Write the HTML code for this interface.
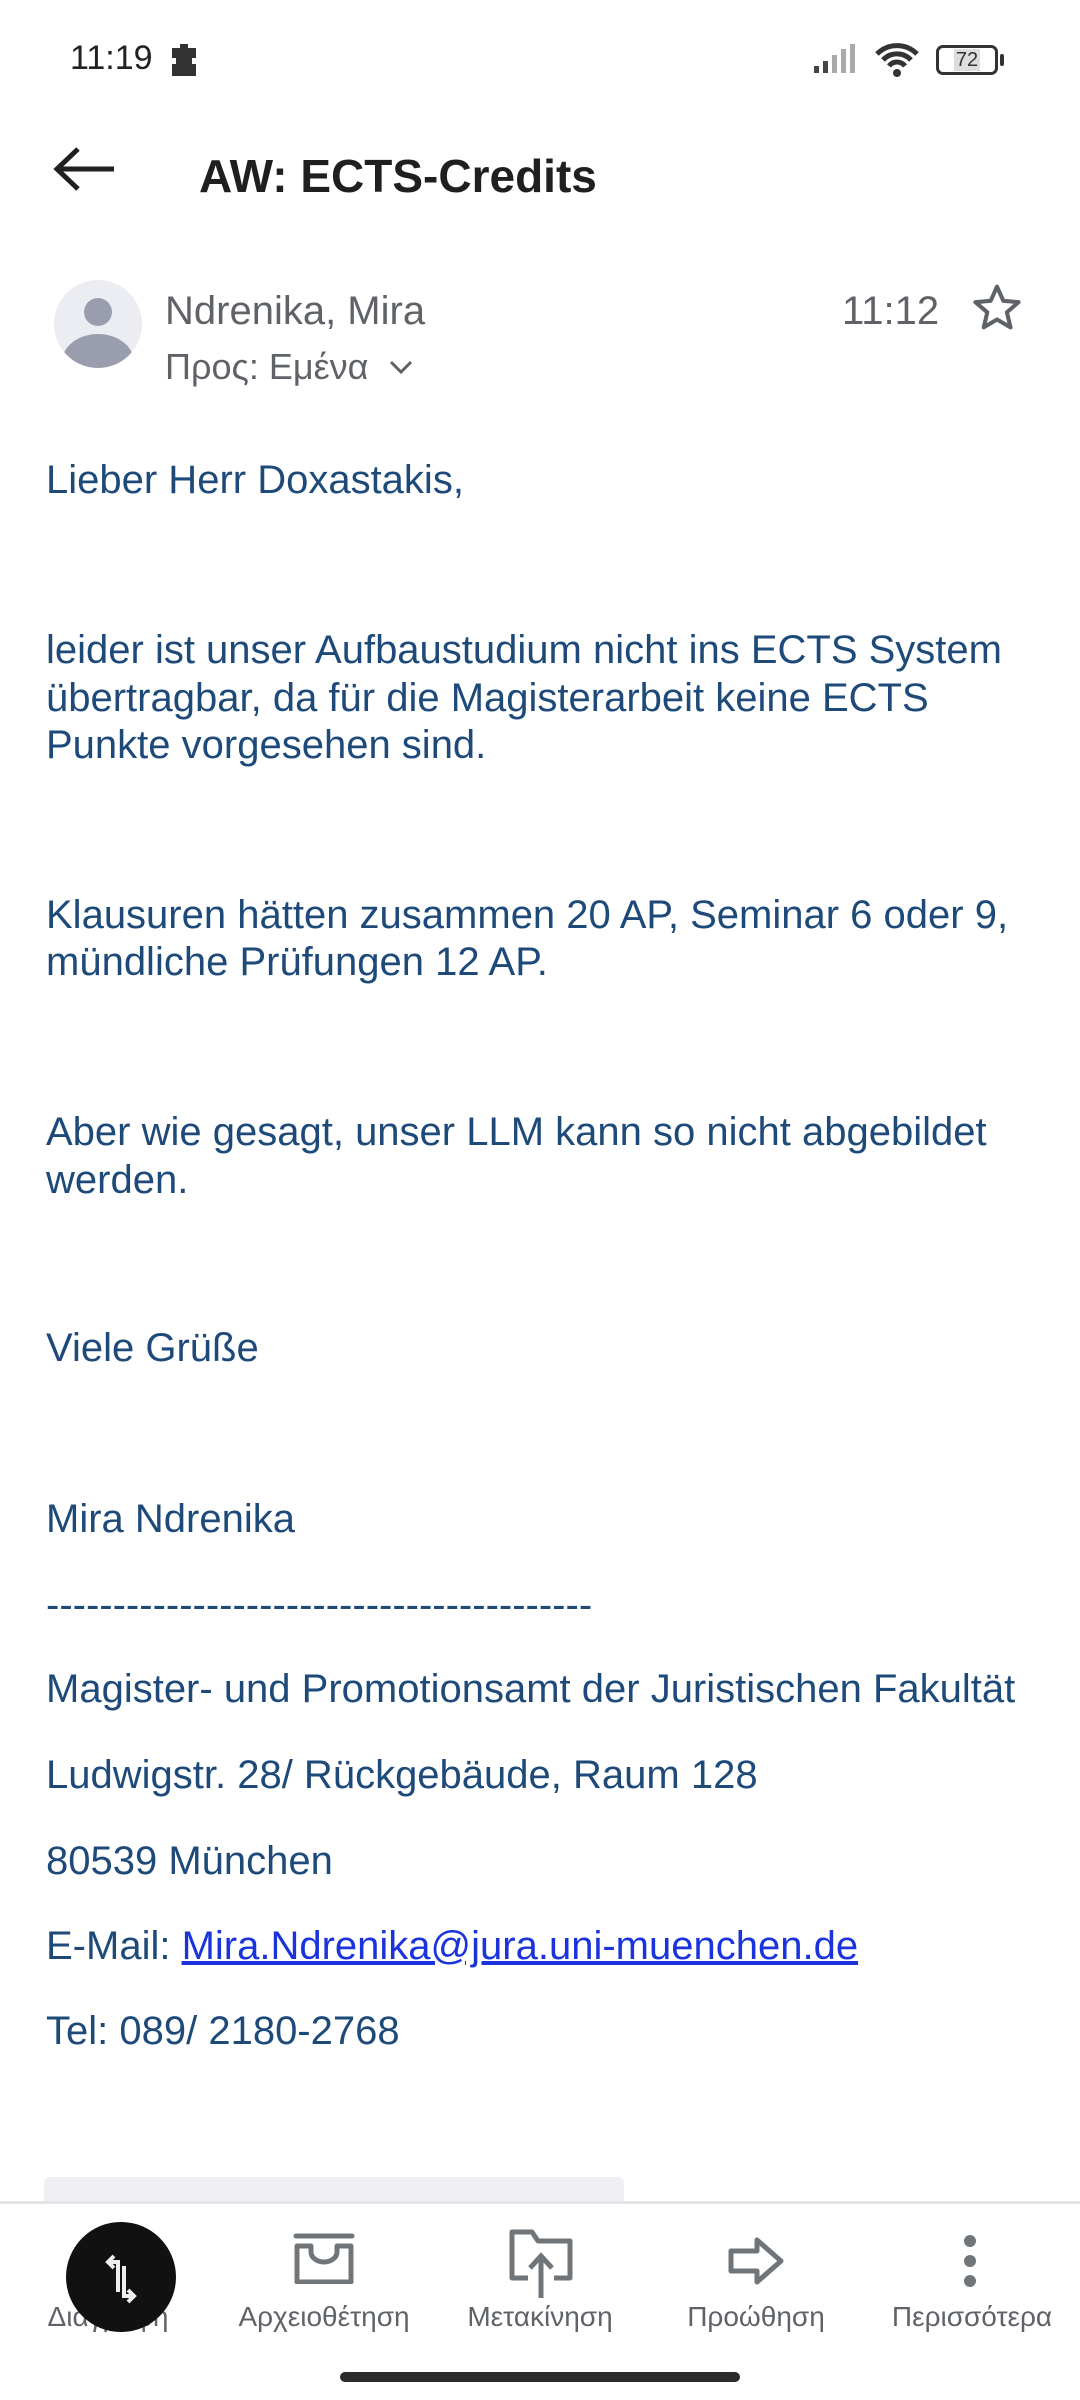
<!DOCTYPE html>
<html><head><meta charset="utf-8">
<style>
*{margin:0;padding:0;box-sizing:border-box}
body{width:1080px;height:2400px;background:#fff;position:relative;overflow:hidden;font-family:"Liberation Sans","DejaVu Sans",sans-serif}
.a{position:absolute;white-space:nowrap}
.b{position:absolute;left:46px;font-size:40px;line-height:44px;color:#1e4a7a;white-space:nowrap}
.lab{position:absolute;top:2299px;font-size:28px;color:#5f6368;width:216px;text-align:center;line-height:36px}
</style></head><body>
<div class="a" style="left:70px;top:38px;font-size:34px;color:#222;line-height:40px">11:19</div>
<svg class="a" style="left:168px;top:42px" width="36" height="34" viewBox="0 0 36 34"><path d="M4 6h8V2h8v4h8v10h-4v6h4v12H4V22h4v-6H4z" fill="#333"/></svg>
<svg class="a" style="left:812px;top:44px" width="50" height="30" viewBox="0 0 50 30"><rect x="2" y="22" width="5" height="7" fill="#444"/><rect x="11" y="17" width="5" height="12" fill="#444"/><rect x="20" y="11" width="5" height="18" fill="#aaa"/><rect x="29" y="5" width="5" height="24" fill="#aaa"/><rect x="38" y="0" width="5" height="29" fill="#aaa"/></svg>
<svg class="a" style="left:874px;top:42px" width="46" height="36" viewBox="0 0 46 36"><path d="M3 12a28 28 0 0 1 40 0M9 18a19 19 0 0 1 28 0M15 24a10 10 0 0 1 16 0" stroke="#333" stroke-width="5" fill="none"/><circle cx="23" cy="31" r="4" fill="#333"/></svg>
<div class="a" style="left:936px;top:45px;width:62px;height:30px;border:3px solid #333;border-radius:7px;font-size:20px;line-height:24px;text-align:center;color:#333"><span style="background:#ddd;padding:0 2px">72</span></div>
<div class="a" style="left:1000px;top:54px;width:4px;height:12px;background:#333;border-radius:2px"></div>

<svg class="a" style="left:52px;top:146px" width="66" height="46" viewBox="0 0 66 46"><path d="M62 23H6M26 3L5 23l21 20" stroke="#1f1f1f" stroke-width="5" fill="none"/></svg>
<div class="a" style="left:199px;top:148px;font-size:46px;font-weight:bold;color:#1f1f1f;line-height:56px">AW: ECTS-Credits</div>

<svg class="a" style="left:54px;top:280px" width="88" height="88" viewBox="0 0 88 88"><defs><clipPath id="c"><circle cx="44" cy="44" r="44"/></clipPath></defs><circle cx="44" cy="44" r="44" fill="#ececf3"/><g clip-path="url(#c)" fill="#9a9dad"><circle cx="44" cy="32" r="14"/><ellipse cx="44" cy="82" rx="36" ry="28"/></g></svg>
<div class="a" style="left:165px;top:288px;font-size:40px;color:#5f6368;line-height:46px">Ndrenika, Mira</div>
<div class="a" style="left:165px;top:344px;font-size:36px;color:#5f6368;line-height:46px">Προς: Εμένα</div>
<svg class="a" style="left:388px;top:358px" width="26" height="18" viewBox="0 0 26 18"><path d="M3 4l10 10 10-10" stroke="#5f6368" stroke-width="3" fill="none"/></svg>
<div class="a" style="left:842px;top:288px;font-size:40px;color:#5f6368;line-height:46px">11:12</div>
<svg class="a" style="left:970px;top:281px" width="54" height="54" viewBox="0 0 24 24"><path d="M12 2.5l2.8 6.3 6.8.6-5.2 4.5 1.6 6.7L12 17.1l-5.9 3.5 1.6-6.7L2.4 9.4l6.8-.6z" stroke="#5f6368" stroke-width="1.8" fill="none" stroke-linejoin="round"/></svg>

<div class="b" style="top:458px">Lieber Herr Doxastakis,</div>
<div class="b" style="top:628px">leider ist unser Aufbaustudium nicht ins ECTS System</div>
<div class="b" style="top:676px">übertragbar, da für die Magisterarbeit keine ECTS</div>
<div class="b" style="top:723px">Punkte vorgesehen sind.</div>
<div class="b" style="top:893px">Klausuren hätten zusammen 20 AP, Seminar 6 oder 9,</div>
<div class="b" style="top:940px">mündliche Prüfungen 12 AP.</div>
<div class="b" style="top:1110px">Aber wie gesagt, unser LLM kann so nicht abgebildet</div>
<div class="b" style="top:1158px">werden.</div>
<div class="b" style="top:1326px">Viele Grüße</div>
<div class="b" style="top:1497px">Mira Ndrenika</div>
<div class="b" style="top:1583px">-----------------------------------------</div>
<div class="b" style="top:1667px">Magister- und Promotionsamt der Juristischen Fakultät</div>
<div class="b" style="top:1753px">Ludwigstr. 28/ Rückgebäude, Raum 128</div>
<div class="b" style="top:1839px">80539 München</div>
<div class="b" style="top:1924px">E-Mail: <span style="color:#1a33dd;text-decoration:underline">Mira.Ndrenika@jura.uni-muenchen.de</span></div>
<div class="b" style="top:2009px">Tel: 089/ 2180-2768</div>

<div class="a" style="left:44px;top:2177px;width:580px;height:40px;background:#f0f0f4;border-radius:6px"></div>
<div class="a" style="left:0;top:2201px;width:1080px;height:199px;background:#fff;border-top:3px solid #e1e3e6"></div>

<svg class="a" style="left:86px;top:2232px" width="44" height="46" viewBox="0 0 44 46"><path d="M4 6h36M14 6V2h16v4M8 6v38h28V6" stroke="#70757a" stroke-width="4" fill="none"/></svg>
<svg class="a" style="left:292px;top:2232px" width="64" height="52" viewBox="0 0 64 52"><path d="M4 4h56" stroke="#70757a" stroke-width="5" stroke-linecap="round"/><path d="M5 14h14v6a13 10 0 0 0 26 0v-6h14v36H5z" stroke="#70757a" stroke-width="5" fill="none" stroke-linejoin="round"/></svg>
<svg class="a" style="left:508px;top:2228px" width="66" height="70" viewBox="0 0 66 70"><path d="M20 50H4V4h20l6 9h32v37H46" stroke="#70757a" stroke-width="5" fill="none" stroke-linejoin="round"/><path d="M33 70V28M22 40l11-12 11 12" stroke="#70757a" stroke-width="5" fill="none"/></svg>
<svg class="a" style="left:728px;top:2236px" width="58" height="50" viewBox="0 0 58 50"><path d="M3 15h26V4l24 21-24 21V35H3z" stroke="#70757a" stroke-width="5" fill="none" stroke-linejoin="round"/></svg>
<svg class="a" style="left:960px;top:2234px" width="20" height="54" viewBox="0 0 20 54"><circle cx="10" cy="7" r="6" fill="#70757a"/><circle cx="10" cy="27" r="6" fill="#70757a"/><circle cx="10" cy="47" r="6" fill="#70757a"/></svg>

<div class="lab" style="left:0">Διαγραφή</div>
<div class="lab" style="left:216px">Αρχειοθέτηση</div>
<div class="lab" style="left:432px">Μετακίνηση</div>
<div class="lab" style="left:648px">Προώθηση</div>
<div class="lab" style="left:864px">Περισσότερα</div>

<div class="a" style="left:66px;top:2222px;width:110px;height:110px;border-radius:50%;background:#111"></div>
<svg class="a" style="left:100px;top:2252px" width="42" height="54" viewBox="0 0 42 54"><path d="M14 4L8 10l6 6M8 10h10v30M28 38l6 6-6 6M34 44H24V14" stroke="#eee" stroke-width="4" fill="none"/></svg>

<div class="a" style="left:340px;top:2372px;width:400px;height:10px;border-radius:5px;background:#2b2b2b"></div>
</body></html>
